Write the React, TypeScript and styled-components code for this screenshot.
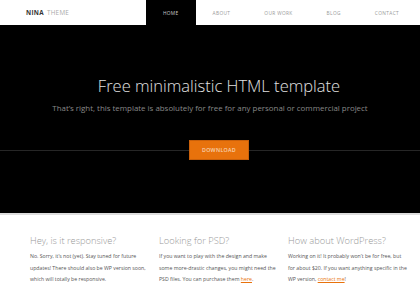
import * as React from "react";
import styled, { createGlobalStyle } from "styled-components";

const GlobalStyle = createGlobalStyle`
    html, body {
        margin: 0;
        padding: 0;
        background: #fff;
        font-family: "Open Sans", "Liberation Sans", sans-serif;
    }
`;

const navItems = ["HOME", "ABOUT", "OUR WORK", "BLOG", "CONTACT"];

export default function App() {
    return <Page>
        <GlobalStyle />
        <Header>
            <Logo><b>NINA</b> THEME</Logo>
            <Nav>
                {navItems.map((item, i) => <NavItem key={item} active={i === 0}>{item}</NavItem>)}
            </Nav>
        </Header>
        <Hero>
            <Title>Free minimalistic HTML template</Title>
            <Subtitle>That’s right, this template is absolutely for free for any personal or commercial project</Subtitle>
            <ButtonRow>
                <DownloadButton>DOWNLOAD</DownloadButton>
            </ButtonRow>
        </Hero>
        <Columns>
            <Column>
                <ColumnTitle>Hey, is it responsive?</ColumnTitle>
                <ColumnText>No. Sorry, it’s not (yet). Stay tuned for future<br />updates! There should also be WP version soon,<br />which will totally be responsive.</ColumnText>
            </Column>
            <Column>
                <ColumnTitle>Looking for PSD?</ColumnTitle>
                <ColumnText>If you want to play with the design and make<br />some more-drastic changes, you might need the<br />PSD files. You can purchase them <a href="#">here</a>.</ColumnText>
            </Column>
            <Column>
                <ColumnTitle>How about WordPress?</ColumnTitle>
                <ColumnText>Working on it! It probably won’t be for free, but<br />for about $20. If you want anything specific in the<br />WP version, <a href="#">contact me</a>!</ColumnText>
            </Column>
        </Columns>
        <FooterBar />
    </Page>;
}

const Page = styled.div`
    width: 420px;
    height: 300px;
    overflow: hidden;
`;

const Header = styled.header`
    height: 25px;
    display: flex;
    align-items: stretch;
    justify-content: space-between;
    padding: 0 4px 0 26px;
    background: #fff;
`;

const Logo = styled.div`
    display: flex;
    align-items: center;
    gap: 3px;
    font-size: 6.3px;
    letter-spacing: 0.3px;
    color: #aaa;

    b {
        color: #333;
        font-weight: 700;
    }
`;

const Nav = styled.nav`
    display: flex;
    align-items: stretch;
`;

const NavItem = styled.div<{ active: boolean }>`
    display: flex;
    align-items: center;
    padding: 0 17px;
    font-size: 4.8px;
    letter-spacing: 0.35px;
    color: ${ p => p.active ? "#ccc" : "#999" };
    background: ${ p => p.active ? "#000" : "transparent" };
`;

const Hero = styled.section`
    height: 190px;
    box-sizing: border-box;
    background: #000;
    border-bottom: 2px solid #ddd;
    display: flex;
    flex-direction: column;
    align-items: center;
    padding: 49px 0 0 18px;
`;

const Title = styled.h1`
    margin: 0;
    font-weight: 300;
    font-size: 16.5px;
    color: #e0e0e0;
    line-height: 24px;
`;

const Subtitle = styled.p`
    margin: 3px 18px 0 0;
    font-weight: 400;
    font-size: 7.9px;
    color: #888;
    line-height: 14px;
    white-space: nowrap;
`;

const ButtonRow = styled.div`
    align-self: stretch;
    margin: 25px 0 0 -18px;
    padding-left: 18px;
    display: flex;
    justify-content: center;
    background: linear-gradient(#000 0, #000 10px, #262626 10px, #262626 11px, #000 11px);
`;

const DownloadButton = styled.div`
    width: 60px;
    height: 20px;
    box-sizing: border-box;
    background: #e8720c;
    border: 1px solid #c9600a;
    color: #f7d3b3;
    font-size: 5.3px;
    font-weight: 600;
    letter-spacing: 0.3px;
    display: flex;
    align-items: center;
    justify-content: center;
`;

const Columns = styled.div`
    display: grid;
    grid-template-columns: repeat(3, 125px);
    column-gap: 4px;
    padding: 19px 0 0 30px;
    height: 85px;
    box-sizing: border-box;
`;

const Column = styled.div`
    display: flex;
    flex-direction: column;
`;

const ColumnTitle = styled.h3`
    margin: 0;
    font-weight: 300;
    font-size: 9.3px;
    color: #999;
    line-height: 13px;
`;

const ColumnText = styled.p`
    margin: 4px 0 0;
    font-size: 5.2px;
    line-height: 11.5px;
    color: #555;
    white-space: nowrap;

    a {
        color: #e8720c;
    }
`;

const FooterBar = styled.div`
    margin-left: 30px;
    width: 378px;
    height: 4px;
    background: #222;
    border-top: 1px solid #777;
`;
